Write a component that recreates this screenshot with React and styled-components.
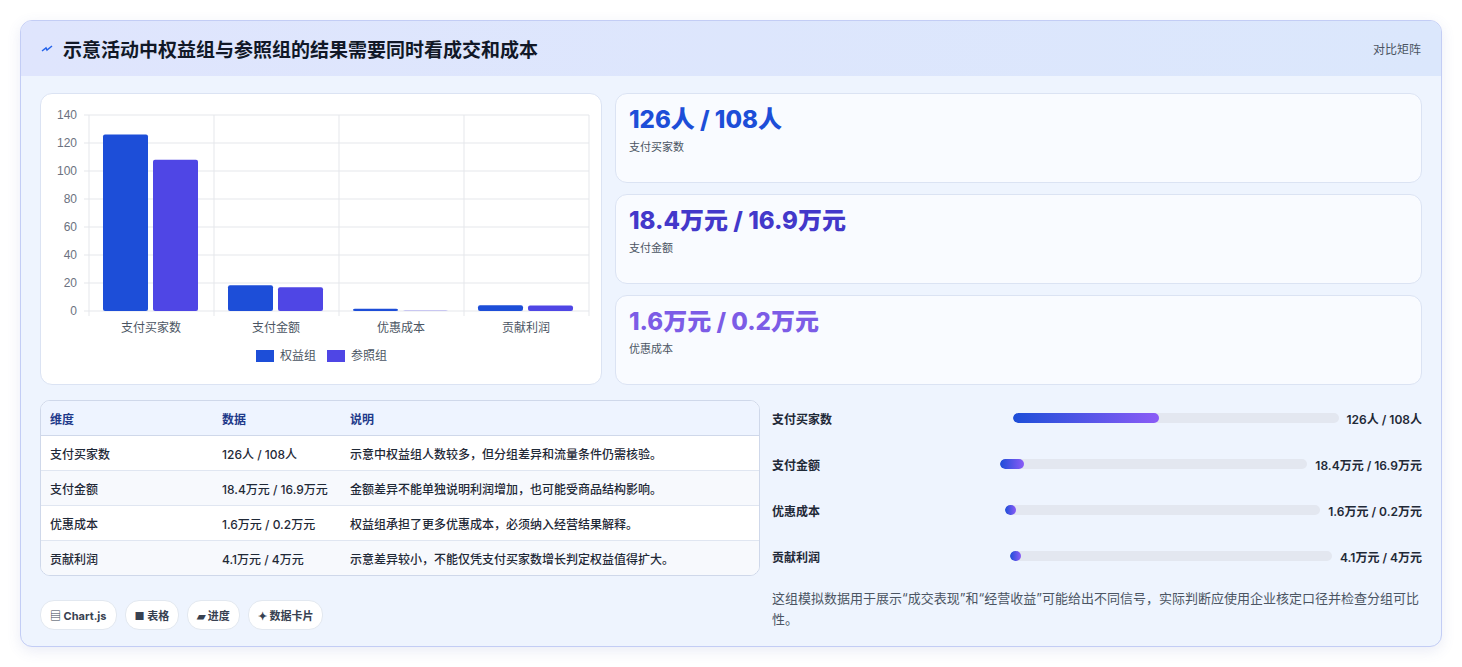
import React from 'react';
import styled, { createGlobalStyle } from 'styled-components';

const Global = createGlobalStyle`
  body { margin: 0; background: #fff; font-family: Inter, "Noto Sans CJK SC", sans-serif; }
`;

const Page = styled.div`
  padding: 20px 20px 21px 20px;
`;

const Card = styled.div`
  border: 1px solid #c3cdf5;
  border-radius: 12px;
  background: #eef4fe;
  overflow: hidden;
  box-shadow: 0 4px 14px rgba(80, 100, 180, 0.12);
`;

const Header = styled.div`
  height: 55px;
  background: linear-gradient(90deg, #dfe5fd, #dbe7fc);
  display: flex;
  align-items: center;
  justify-content: space-between;
  padding: 0 20px;
`;

const Title = styled.h1`
  margin: 0;
  font-size: 19px;
  font-weight: 700;
  color: #111827;
  display: flex;
  align-items: center;
  gap: 10px;
`;

const Tag = styled.span`
  font-size: 12px;
  color: #4b5563;
`;

const Body = styled.div`
  padding: 17px 19px 16px 19px;
  display: flex;
  flex-direction: column;
  gap: 15px;
`;

const TopRow = styled.div`
  display: grid;
  grid-template-columns: 562px 1fr;
  gap: 13px;
`;

const BottomRow = styled.div`
  display: grid;
  grid-template-columns: 720px 1fr;
  gap: 12px;
`;

const Panel = styled.div`
  background: #fff;
  border: 1px solid #dbe3f3;
  border-radius: 12px;
`;

const ChartPanel = styled(Panel)`
  height: 290px;
`;

const Stats = styled.div`
  display: grid;
  grid-template-rows: repeat(3, 1fr);
  gap: 11px;
`;

const Stat = styled(Panel)`
  background: #f9fbff;
  padding: 10px 13px;
`;

const StatValue = styled.div`
  font-size: 24px;
  font-weight: 800;
  color: ${p => p.$c};
  line-height: 32px;
`;

const StatLabel = styled.div`
  font-size: 11px;
  color: #4b5563;
  margin-top: 2px;
`;

const Table = styled.div`
  border: 1px solid #cfd8ea;
  border-radius: 10px;
  overflow: hidden;
  background: #fff;
`;

const Row = styled.div`
  display: grid;
  grid-template-columns: 172px 128px 1fr;
  height: 34px;
  align-items: center;
  padding: 0 9px;
  font-size: 12px;
  color: ${p => (p.$head ? '#1e3a8a' : '#1f2937')};
  font-weight: ${p => (p.$head ? 600 : 500)};
  background: ${p => (p.$head ? '#eef4ff' : p.$alt ? '#f7f9fd' : '#fff')};
  border-top: ${p => (p.$first ? 'none' : '1px solid #e0e6f1')};
  ${p => p.$head && 'border-bottom: 1px solid #cfd8ea;'}
`;

const Chips = styled.div`
  display: flex;
  gap: 8px;
  margin-top: 24px;
`;

const Chip = styled.span`
  background: #fff;
  border: 1px solid #e2e8f0;
  border-radius: 14px;
  padding: 6px 9px;
  font-size: 11px;
  font-weight: 700;
  color: #374151;
`;

const Bars = styled.div`
  display: flex;
  flex-direction: column;
  gap: 10px;
`;

const BarRow = styled.div`
  display: grid;
  grid-template-columns: 1fr 1.4fr auto;
  align-items: center;
  gap: 8px;
  height: 36px;
  font-size: 12px;
  font-weight: 600;
  color: #1f2937;
`;

const Track = styled.div`
  height: 10px;
  border-radius: 5px;
  background: #e3e7f0;
  overflow: hidden;
`;

const Fill = styled.div`
  height: 100%;
  border-radius: 5px;
  background: linear-gradient(90deg, #1d4ed8, #8b5cf6);
  min-width: 11px;
`;

const Note = styled.p`
  margin: 14px 0 0;
  font-size: 13px;
  line-height: 21px;
  color: #4b5563;
`;

const cats = [
  ['支付买家数', 126, 108],
  ['支付金额', 18.4, 16.9],
  ['优惠成本', 1.6, 0.2],
  ['贡献利润', 4.1, 4],
];

function Chart() {
  const x0 = 48, w = 125, y0 = 217, k = 1.4;
  return (
    <svg width="560" height="290" style={{ display: 'block' }}>
      {[0, 20, 40, 60, 80, 100, 120, 140].map(v => (
        <g key={v}>
          <line x1={x0 - 5} x2={x0 + 500} y1={y0 - v * k} y2={y0 - v * k} stroke="#e5e7eb" />
          <text x={x0 - 12} y={y0 - v * k + 4} fontSize="12" fill="#6b7280" textAnchor="end" fontFamily="Liberation Sans, sans-serif">{v}</text>
        </g>
      ))}
      {[0, 1, 2, 3, 4].map(i => (
        <line key={i} x1={x0 + i * w} x2={x0 + i * w} y1={y0 - 140 * k} y2={y0 + 5} stroke="#e5e7eb" />
      ))}
      {cats.map(([n, a, b], i) => (
        <g key={n}>
          <rect x={x0 + i * w + 14} y={y0 - a * k} width="45" height={a * k} fill="#1d4ed8" rx="2" />
          <rect x={x0 + i * w + 64} y={y0 - b * k} width="45" height={b * k} fill="#4f46e5" rx="2" />
          <text x={x0 + i * w + 62} y={y0 + 21} fontSize="12" fill="#4b5563" textAnchor="middle">{n}</text>
        </g>
      ))}
      <rect x="215" y="256" width="18" height="12" fill="#1d4ed8" />
      <text x="239" y="266" fontSize="12" fill="#4b5563">权益组</text>
      <rect x="286" y="256" width="18" height="12" fill="#4f46e5" />
      <text x="310" y="266" fontSize="12" fill="#4b5563">参照组</text>
    </svg>
  );
}

const rows = [
  ['支付买家数', '126人 / 108人', '示意中权益组人数较多，但分组差异和流量条件仍需核验。'],
  ['支付金额', '18.4万元 / 16.9万元', '金额差异不能单独说明利润增加，也可能受商品结构影响。'],
  ['优惠成本', '1.6万元 / 0.2万元', '权益组承担了更多优惠成本，必须纳入经营结果解释。'],
  ['贡献利润', '4.1万元 / 4万元', '示意差异较小，不能仅凭支付买家数增长判定权益值得扩大。'],
];

const bars = [
  ['支付买家数', 45, '126人 / 108人'],
  ['支付金额', 8, '18.4万元 / 16.9万元'],
  ['优惠成本', 2, '1.6万元 / 0.2万元'],
  ['贡献利润', 2, '4.1万元 / 4万元'],
];

export default function App() {
  return (
    <Page>
      <Global />
      <Card>
        <Header>
          <Title>
            <svg width="12" height="12" viewBox="0 0 12 12"><path d="M1 8 L5 5 L6 7 L11 3" stroke="#2563eb" strokeWidth="1.5" fill="none" /></svg>
            示意活动中权益组与参照组的结果需要同时看成交和成本
          </Title>
          <Tag>对比矩阵</Tag>
        </Header>
        <Body>
          <TopRow>
            <ChartPanel><Chart /></ChartPanel>
            <Stats>
              <Stat><StatValue $c="#1d4ed8">126人 / 108人</StatValue><StatLabel>支付买家数</StatLabel></Stat>
              <Stat><StatValue $c="#4338ca">18.4万元 / 16.9万元</StatValue><StatLabel>支付金额</StatLabel></Stat>
              <Stat><StatValue $c="#7c5ce6">1.6万元 / 0.2万元</StatValue><StatLabel>优惠成本</StatLabel></Stat>
            </Stats>
          </TopRow>
          <BottomRow>
            <div>
              <Table>
                <Row $head $first><span>维度</span><span>数据</span><span>说明</span></Row>
                {rows.map((r, i) => (
                  <Row key={r[0]} $alt={i % 2 === 1} $first={i === 0}>
                    <span>{r[0]}</span><span>{r[1]}</span><span>{r[2]}</span>
                  </Row>
                ))}
              </Table>
              <Chips>
                <Chip>▤ Chart.js</Chip>
                <Chip>■ 表格</Chip>
                <Chip>▰ 进度</Chip>
                <Chip>✦ 数据卡片</Chip>
              </Chips>
            </div>
            <div>
              <Bars>
                {bars.map(b => (
                  <BarRow key={b[0]}>
                    <span>{b[0]}</span>
                    <Track><Fill style={{ width: `${b[1]}%` }} /></Track>
                    <span>{b[2]}</span>
                  </BarRow>
                ))}
              </Bars>
              <Note>这组模拟数据用于展示“成交表现”和“经营收益”可能给出不同信号，实际判断应使用企业核定口径并检查分组可比性。</Note>
            </div>
          </BottomRow>
        </Body>
      </Card>
    </Page>
  );
}
